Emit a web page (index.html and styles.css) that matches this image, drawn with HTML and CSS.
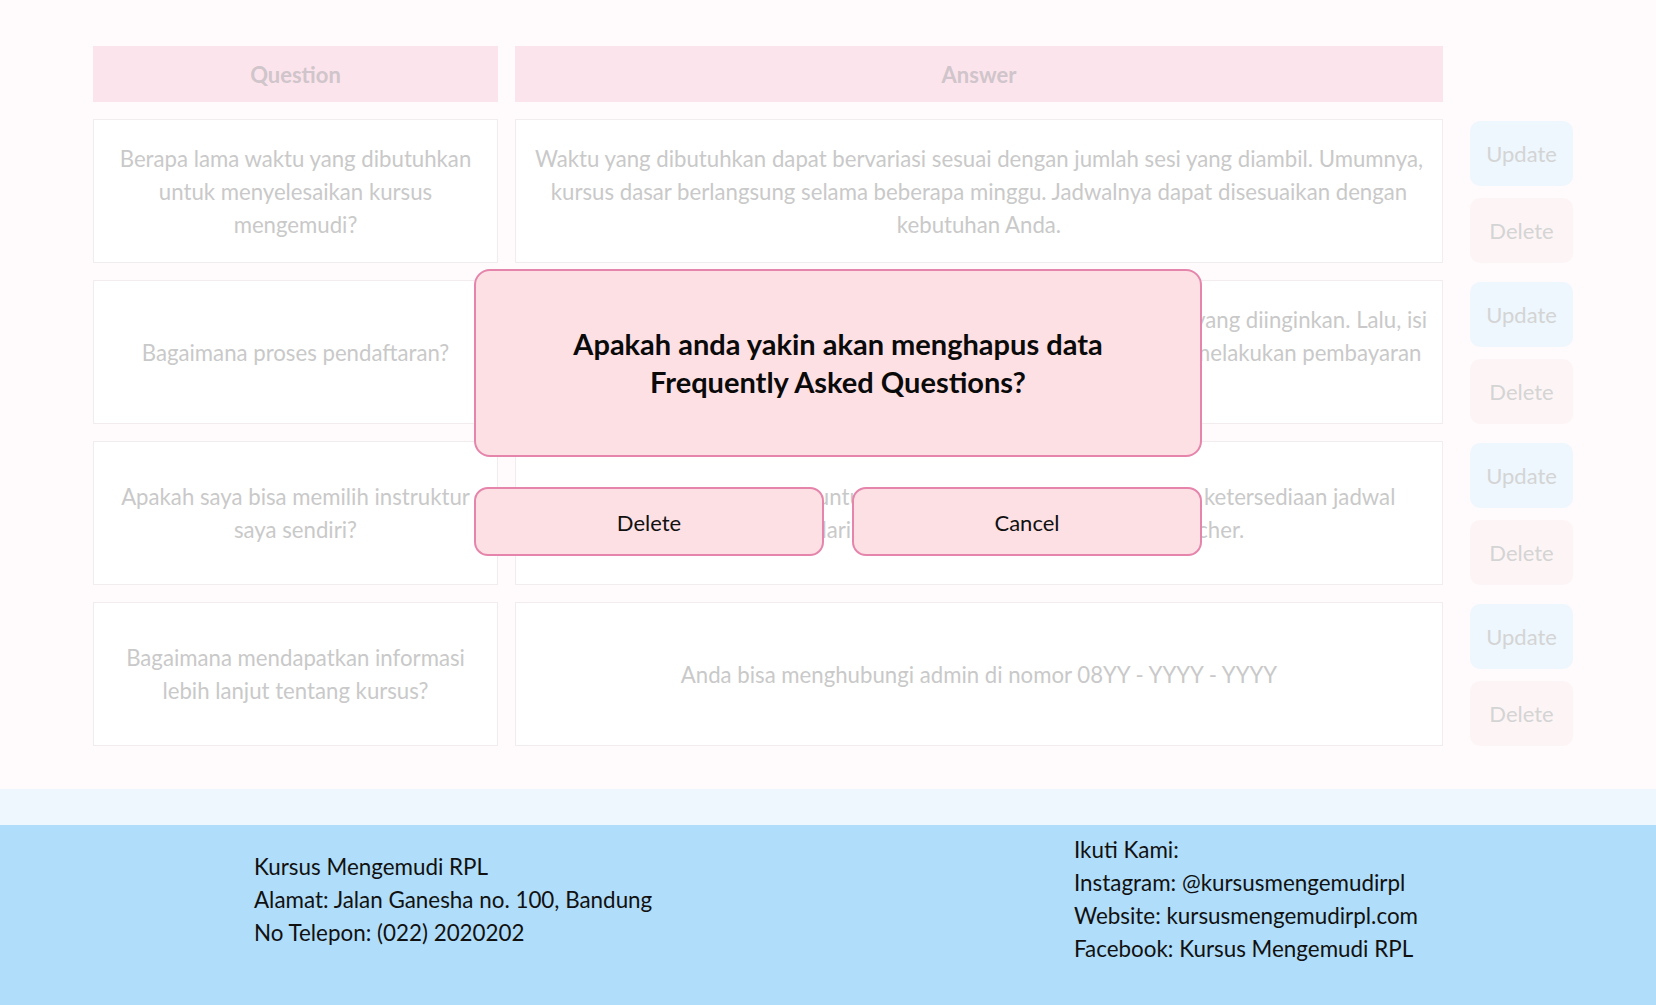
FILE: index.html
```html
<!DOCTYPE html>
<html lang="id">
<head>
<meta charset="utf-8">
<title>FAQ - Kursus Mengemudi RPL</title>
<link rel="stylesheet" href="styles.css">
</head>
<body>
<main class="faq">
  <div class="faq-grid">
    <div class="head">Question</div>
    <div class="head">Answer</div>
    <div class="head-empty"></div>

    <div class="cell">Berapa lama waktu yang dibutuhkan untuk menyelesaikan kursus mengemudi?</div>
    <div class="cell answer">Waktu yang dibutuhkan dapat bervariasi sesuai dengan jumlah sesi yang diambil. Umumnya,<br>kursus dasar berlangsung selama beberapa minggu. Jadwalnya dapat disesuaikan dengan<br>kebutuhan Anda.</div>
    <div class="actions"><button class="btn-update">Update</button><button class="btn-delete">Delete</button></div>

    <div class="cell">Bagaimana proses pendaftaran?</div>
    <div class="cell answer">Anda dapat mendaftar melalui situs ini dengan memilih paket kursus yang diinginkan. Lalu, isi<br>formulir pendaftaran dengan data diri Anda secara lengkap, barulah melakukan pembayaran<br>sesuai paket.</div>
    <div class="actions"><button class="btn-update">Update</button><button class="btn-delete">Delete</button></div>

    <div class="cell">Apakah saya bisa memilih instruktur saya sendiri?</div>
    <div class="cell answer">Ya, silakan hubungi admin untuk memilih instruktur sesuai dengan ketersediaan jadwal<br>instruktur dari daftar yang tersedia di halaman Teacher.</div>
    <div class="actions"><button class="btn-update">Update</button><button class="btn-delete">Delete</button></div>

    <div class="cell">Bagaimana mendapatkan informasi lebih lanjut tentang kursus?</div>
    <div class="cell answer">Anda bisa menghubungi admin di nomor 08YY - YYYY - YYYY</div>
    <div class="actions"><button class="btn-update">Update</button><button class="btn-delete">Delete</button></div>
  </div>

  <div class="modal">
    <div class="modal-box">Apakah anda yakin akan menghapus data<br>Frequently Asked Questions?</div>
    <div class="modal-actions">
      <button class="modal-btn">Delete</button>
      <button class="modal-btn">Cancel</button>
    </div>
  </div>
</main>
<div class="strip"></div>
<footer class="footer">
  <div class="footer-col footer-left">
    <p>Kursus Mengemudi RPL</p>
    <p>Alamat: Jalan Ganesha no. 100, Bandung</p>
    <p>No Telepon: (022) 2020202</p>
  </div>
  <div class="footer-col">
    <p>Ikuti Kami:</p>
    <p>Instagram: @kursusmengemudirpl</p>
    <p>Website: kursusmengemudirpl.com</p>
    <p>Facebook: Kursus Mengemudi RPL</p>
  </div>
</footer>
</body>
</html>
```

FILE: styles.css
```css
* { box-sizing: border-box; }
html, body { margin: 0; padding: 0; }
body {
  font-family: "Lato", "Open Sans", "DejaVu Sans", sans-serif;
  background: #fffafb;
  color: #111;
  width: 1656px;
  overflow: hidden;
}
.faq {
  position: relative;
  padding: 46px 83px 43px 93px;
  background: #fffafb;
}
.faq-grid {
  display: grid;
  grid-template-columns: 405px 928px 113px;
  grid-template-rows: 56px repeat(4, 144px);
  column-gap: 17px;
  row-gap: 17px;
}
.head {
  background: #fce4ec;
  color: #cfc5ca;
  font-weight: 700;
  font-size: 22px;
  display: flex;
  align-items: center;
  justify-content: center;
}
.cell {
  background: #ffffff;
  border: 1px solid #f3ecee;
  color: #c9c9c9;
  font-size: 22.2px;
  line-height: 33px;
  text-align: center;
  display: flex;
  align-items: center;
  justify-content: center;
  padding: 0 14px;
}
.answer {
  white-space: nowrap;
  padding: 0 4px;
}
.actions {
  display: flex;
  flex-direction: column;
  gap: 12px;
  padding: 2px 0 0 10px;
}
.actions button {
  height: 65px;
  width: 103px;
  border: none;
  border-radius: 10px;
  font-family: inherit;
  font-size: 22px;
  color: #d4d4d4;
}
.btn-update { background: #eef7fe; }
.btn-delete { background: #fdf5f5; }

.modal {
  position: absolute;
  top: 269px;
  left: 474px;
  width: 728px;
}
.modal-box {
  height: 188px;
  background: #fde0e3;
  border: 2px solid #e585ac;
  border-radius: 16px;
  display: flex;
  align-items: center;
  justify-content: center;
  text-align: center;
  font-weight: 700;
  font-size: 29px;
  line-height: 38px;
  color: #0a0a0a;
}
.modal-actions {
  display: flex;
  gap: 28px;
  margin-top: 30px;
}
.modal-btn {
  flex: 1;
  height: 69px;
  background: #fde0e3;
  border: 2px solid #e585ac;
  border-radius: 14px;
  font-family: inherit;
  font-size: 22px;
  color: #111;
  padding-top: 3px;
}
.strip {
  height: 36px;
  background: #eef7fe;
}
.footer {
  height: 180px;
  background: #b0ddf9;
  display: flex;
  align-items: center;
  padding: 8px 0 40px 254px;
}
.footer-col p {
  margin: 0;
  font-size: 22.4px;
  line-height: 33px;
  color: #111;
}
.footer-left { width: 820px; }
```
